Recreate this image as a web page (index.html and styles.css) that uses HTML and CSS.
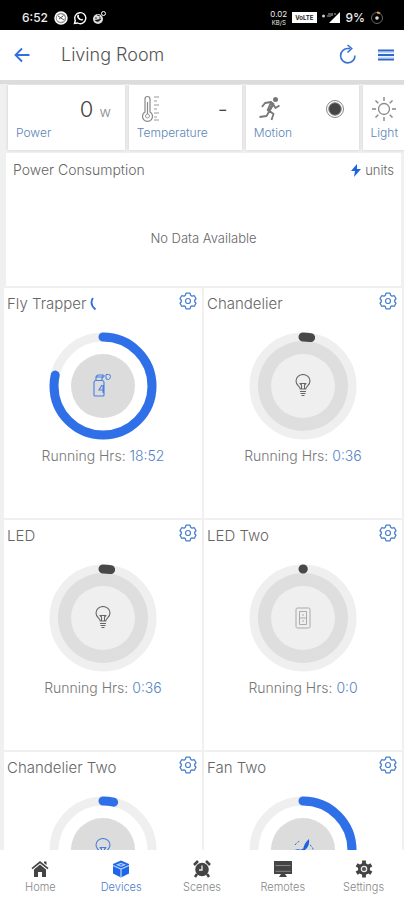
FILE: index.html
```html
<!DOCTYPE html>
<html lang="en">
<head>
<meta charset="utf-8">
<meta name="viewport" content="width=device-width, initial-scale=1">
<title>Living Room</title>
<link rel="stylesheet" href="styles.css">
</head>
<body>
<svg class="defs" aria-hidden="true">
  <symbol id="gear" viewBox="0 0 18 18"><path d="M7 1.200h4l.7 2.200 1.300.8 2.300-.5 1.700 3-1.300 1.500v1.600l1.300 1.500-1.700 3-2.300-.5-1.300.8-.7 2.200H7l-.7-2.200-1.300-.8-2.300.5-1.700-3 1.300-1.500V8.200L1 6.700l1.700-3 2.300.5 1.300-.8z" fill="none" stroke="currentColor" stroke-width="1.300" stroke-linejoin="round"/><circle cx="9" cy="9" r="2.500" fill="none" stroke="currentColor" stroke-width="1.200"/></symbol>
  <symbol id="bulb" viewBox="0 0 18 24"><path d="M6.200 15c0-2.500-4.200-3.500-4.200-8a7 6.500 0 0 1 14 0c0 4.500-4.200 5.500-4.200 8z M6 17.500h6 M6.500 19.500h5 M7.500 21.500h3 M7.500 14.500V11L6 9.500h6L10.500 11v3.500" fill="none" stroke="currentColor" stroke-width="1.100" stroke-linejoin="round"/></symbol>
  <symbol id="spray" viewBox="0 0 18 24"><path d="M1 9.500q0-2 2-2h6q2 0 2 2V22q0 1-1 1H2q-1 0-1-1z M3 7V4h6v3 M3 3.500 5 2h5v3 M10 3h2 M9 12l-3 5h4v-5 M10 17v3" fill="none" stroke="currentColor" stroke-width="1.100"/><path d="M13 1.500h2.500q2 0 2 2t-2 3L13 6z" fill="none" stroke="currentColor"/></symbol>
  <symbol id="switch" viewBox="0 0 18 24"><rect x="2" y="2" width="14" height="20" rx="1.500" fill="none" stroke="currentColor"/><path d="M5.500 5.500h7v13h-7z M5.500 12h7 M9 8v2 M9 14v2" fill="none" stroke="currentColor"/></symbol>
  <symbol id="fan" viewBox="0 0 24 24"><path d="M12 11Q13 4 18 0q1 7-4 11z M10.500 11Q5 9 1 13q5 2 9.500 0z M13 14q0 6 6 8 1-5-4-9z" fill="currentColor"/><circle cx="12" cy="12" r="2.200" fill="currentColor"/><path d="M4 6q2-3 5-4 M19 6q3 2 3 5 M4 18q2 3 5 3" fill="none" stroke="currentColor" stroke-dasharray="2 1.500"/></symbol>
</svg>

<div class="status">
  <div class="status-side">
    <span class="clock">6:52</span>
    <svg width="14" height="14" viewBox="0 0 14 14"><circle cx="7" cy="7" r="6" fill="#999" stroke="#fff" stroke-width="1.500"/><path d="M3 5l4-2 4 3-1 4-4 1-3-2z" fill="#fff"/><path d="M4 5l6 4M5 8l4-3" stroke="#555"/></svg>
    <svg width="14" height="14" viewBox="0 0 14 14"><path d="M1.500 12.500l.8-3A5.500 5.500 0 1 1 4.700 12z" fill="none" stroke="#fff" stroke-width="1.400"/><path d="M4.500 4q1-1 1.700.7L5.700 6 8 8.200l1.200-.5q1.800 1 .3 1.800Q6.500 10 4.500 7q-1-2 0-3z" fill="#fff"/></svg>
    <svg width="14" height="14" viewBox="0 0 14 14"><circle cx="6" cy="8" r="5" fill="#ddd"/><circle cx="11.500" cy="2.500" r="2" fill="none" stroke="#fff"/><path d="M3 7h2M7 7h2M3 9q3 3 6-1M5 4l3 1" stroke="#333"/></svg>
  </div>
  <div class="status-side">
    <span class="rate"><b>0.02</b><b class="unit">KB/S</b></span>
    <span class="volte">VoLTE</span>
    <svg width="19" height="13" viewBox="0 0 19 13"><circle cx="1.500" cy="5" r="1.500" fill="#ccc"/><path d="M18 1v11H7z" fill="#fff"/><path d="M6 3h3M10 2v3M12 3h2M5 5h4" stroke="#aaa" stroke-width="1.200"/></svg>
    <span class="battery">9%</span>
    <svg width="14" height="14" viewBox="0 0 14 14"><circle cx="7" cy="7" r="5.500" fill="none" stroke="#666"/><path d="M7 1.500a5.500 5.500 0 0 1 3 .9" fill="none" stroke="#e9a13b" stroke-width="1.800"/><circle cx="7" cy="7" r="1.800" fill="#ddd"/></svg>
  </div>
</div>

<header class="topbar">
  <button class="icon-btn" aria-label="Back"><svg width="16" height="16" viewBox="0 0 16 16"><path d="M15.500 8H1.500M8 1.500L1.500 8 8 14.500" fill="none" stroke="#2f6fde" stroke-width="1.800"/></svg></button>
  <h1>Living Room</h1>
  <button class="icon-btn" aria-label="Refresh"><svg width="18" height="22" viewBox="0 0 18 22"><path d="M16 11.500a7.200 7.200 0 1 1-7.200-7H11" fill="none" stroke="#3973cf" stroke-width="1.600"/><path d="M8.500 1l4.200 3.500-4.200 4" fill="none" stroke="#3973cf" stroke-width="1.600"/></svg></button>
  <button class="icon-btn menu" aria-label="Menu"><svg width="16" height="12" viewBox="0 0 16 12"><path d="M0 1.500h16M0 6h16M0 10.500h16" stroke="#2f67cd" stroke-width="2"/><path d="M0 3.700h16M0 8.200h16" stroke="#b3cbf2"/></svg></button>
</header>

<main>
  <section class="sensors" aria-label="Sensors">
    <article class="sensor">
      <div class="reading end"><span class="value">0</span><span class="unit-w">w</span></div>
      <div class="label">Power</div>
    </article>
    <article class="sensor">
      <div class="reading">
        <svg width="20" height="28" viewBox="0 0 20 28"><path d="M4 17V4a2.500 2.500 0 0 1 5 0v13a5 5 0 1 1-5 0z M6.500 7v12" fill="none" stroke="#888" stroke-width="1.200"/><circle cx="6.500" cy="21" r="2" fill="none" stroke="#999"/><path d="M13 2h5M13 6h3M13 10h5M13 14h3M13 18h5M13 22h3M13 25h5" stroke="#999"/></svg>
        <span class="value">-</span>
      </div>
      <div class="label">Temperature</div>
    </article>
    <article class="sensor">
      <div class="reading">
        <svg width="24" height="26" viewBox="0 0 24 26"><circle cx="17.500" cy="3.500" r="2.500" fill="#777"/><path d="M4 11l3-4 6-1 2.500 2-4 7 4 3-2 6M15 8l2.500 4 4-2.500M11.500 15l-3 5-7 1" fill="none" stroke="#777" stroke-width="1.800" stroke-linejoin="round"/><path d="M12.500 7l2 2-4 6-1-1z" fill="#999" stroke="#777" stroke-width="1.500"/></svg>
        <svg width="20" height="20" viewBox="0 0 20 20"><circle cx="10" cy="10" r="8.500" fill="#fff" stroke="#888"/><circle cx="10" cy="10" r="6.200" fill="#444" stroke="#777"/></svg>
      </div>
      <div class="label">Motion</div>
    </article>
    <article class="sensor">
      <div class="reading sun">
        <svg width="26" height="26" viewBox="0 0 26 26"><circle cx="13" cy="13" r="5.500" fill="none" stroke="#888" stroke-width="1.300"/><path d="M13 1v4M13 21v4M1 13h4M21 13h4M4.500 4.500l2.800 2.800M18.700 18.700l2.800 2.800M4.500 21.500l2.800-2.800M18.700 7.300l2.800-2.800" stroke="#888" stroke-width="1.400"/></svg>
      </div>
      <div class="label">Light</div>
    </article>
  </section>

  <section class="consumption">
    <div class="consumption-head">
      <h2>Power Consumption</h2>
      <span class="units"><svg width="10" height="13" viewBox="0 0 10 13"><path d="M6 0L0 7h4l-1 6 7-8H6z" fill="#1d62e0"/></svg>units</span>
    </div>
    <p>No Data Available</p>
  </section>

  <section class="devices" aria-label="Devices">
    <article class="device">
      <div class="device-head"><h2>Fly Trapper</h2><svg class="moon" width="7" height="14" viewBox="0 0 7 14"><path d="M3 1Q-1 7 5.500 12.500" fill="none" stroke="#2f6fde" stroke-width="1.800"/></svg><button class="gear" aria-label="Fly Trapper settings"><svg width="18" height="18"><use href="#gear"/></svg></button></div>
      <button class="dial on" aria-label="Toggle Fly Trapper"><svg viewBox="0 0 108 108"><circle class="track" cx="54" cy="54" r="49"/><circle class="disc" cx="54" cy="54" r="32"/><circle class="arc" cx="54" cy="54" r="49" pathLength="100" stroke-dasharray="78.600 100"/><use href="#spray" x="44" y="41" width="18" height="24"/></svg></button>
      <p>Running Hrs: <span>18:52</span></p>
    </article>
    <article class="device">
      <div class="device-head"><h2>Chandelier</h2><button class="gear" aria-label="Chandelier settings"><svg width="18" height="18"><use href="#gear"/></svg></button></div>
      <button class="dial" aria-label="Toggle Chandelier"><svg viewBox="0 0 108 108"><circle class="track" cx="54" cy="54" r="49"/><circle class="ring" cx="54" cy="54" r="45"/><circle class="disc" cx="54" cy="54" r="32"/><circle class="arc" cx="54" cy="54" r="49" pathLength="100" stroke-dasharray="2.500 100"/><use href="#bulb" x="45" y="42" width="18" height="24"/></svg></button>
      <p>Running Hrs: <span>0:36</span></p>
    </article>
    <article class="device">
      <div class="device-head"><h2>LED</h2><button class="gear" aria-label="LED settings"><svg width="18" height="18"><use href="#gear"/></svg></button></div>
      <button class="dial" aria-label="Toggle LED"><svg viewBox="0 0 108 108"><circle class="track" cx="54" cy="54" r="49"/><circle class="ring" cx="54" cy="54" r="45"/><circle class="disc" cx="54" cy="54" r="32"/><circle class="arc" cx="54" cy="54" r="49" pathLength="100" stroke-dasharray="2.500 100"/><use href="#bulb" x="45" y="42" width="18" height="24"/></svg></button>
      <p>Running Hrs: <span>0:36</span></p>
    </article>
    <article class="device">
      <div class="device-head"><h2>LED Two</h2><button class="gear" aria-label="LED Two settings"><svg width="18" height="18"><use href="#gear"/></svg></button></div>
      <button class="dial dim" aria-label="Toggle LED Two"><svg viewBox="0 0 108 108"><circle class="track" cx="54" cy="54" r="49"/><circle class="ring" cx="54" cy="54" r="45"/><circle class="disc" cx="54" cy="54" r="32"/><circle class="arc" cx="54" cy="54" r="49" pathLength="100" stroke-dasharray="0.100 100"/><use href="#switch" x="45" y="42" width="18" height="24"/></svg></button>
      <p>Running Hrs: <span>0:0</span></p>
    </article>
    <article class="device">
      <div class="device-head"><h2>Chandelier Two</h2><button class="gear" aria-label="Chandelier Two settings"><svg width="18" height="18"><use href="#gear"/></svg></button></div>
      <button class="dial on" aria-label="Toggle Chandelier Two"><svg viewBox="0 0 108 108"><circle class="track" cx="54" cy="54" r="49"/><circle class="disc" cx="54" cy="54" r="32"/><circle class="arc" cx="54" cy="54" r="49" pathLength="100" stroke-dasharray="3.500 100"/><use href="#bulb" x="45" y="42" width="18" height="24"/></svg></button>
    </article>
    <article class="device">
      <div class="device-head"><h2>Fan Two</h2><button class="gear" aria-label="Fan Two settings"><svg width="18" height="18"><use href="#gear"/></svg></button></div>
      <button class="dial on" aria-label="Toggle Fan Two"><svg viewBox="0 0 108 108"><circle class="track" cx="54" cy="54" r="49"/><circle class="disc" cx="54" cy="54" r="32"/><circle class="arc" cx="54" cy="54" r="49" pathLength="100" stroke-dasharray="40 100"/><use class="blades" href="#fan" x="42" y="43" width="24" height="24"/></svg></button>
    </article>
  </section>
</main>

<nav class="tabs" aria-label="Main">
  <a href="#home"><svg width="18" height="18" viewBox="0 0 18 18"><path d="M9 1l8.500 7-1 1.300L9 3.300 1.500 9.300.5 8zM13 1.500h2.500V5L13 3z" fill="#444"/><path d="M9 4.500l6 5V17h-4v-5H7v5H3V9.500z" fill="#444"/></svg>Home</a>
  <a href="#devices" class="active" aria-current="page"><svg width="18" height="18" viewBox="0 0 18 18"><path d="M9 .5L17 4v9.500L9 17.500 1 13.500V4z" fill="#1d66e8"/><path d="M1 5.500L9 9l8-3.500M9 9v8.500M9 3.500l3.500 1.300L9 6.200 5.500 4.800z" fill="none" stroke="#b8d2ff" stroke-width="1.200"/></svg>Devices</a>
  <a href="#scenes"><svg width="18" height="18" viewBox="0 0 18 18"><circle cx="9" cy="9.500" r="6.800" fill="#444"/><path d="M1 5l4-4M17 5l-4-4M4 14l-2 3M14 14l2 3" stroke="#444" stroke-width="2.500"/><path d="M9 5.500v4.500H6" fill="none" stroke="#eee" stroke-width="1.300"/></svg>Scenes</a>
  <a href="#remotes"><svg width="20" height="18" viewBox="0 0 20 18"><path d="M1 1h18v13h-7l2 3H6l2-3H1z" fill="#444"/><path d="M2.500 11.300h15M2.500 5.500h15" stroke="#888"/></svg>Remotes</a>
  <a href="#settings"><svg width="18" height="18" viewBox="0 0 18 18"><circle cx="9" cy="9" r="6" fill="#444"/><path d="M9 .5v17M1.600 4.800l14.800 8.400M1.600 13.200l14.800-8.400" stroke="#444" stroke-width="3.800"/><circle cx="9" cy="9" r="2.700" fill="#555" stroke="#eee" stroke-width="1.200"/></svg>Settings</a>
</nav>
</body>
</html>
```

FILE: styles.css
```css
* { box-sizing: border-box; }

body {
  margin: 0;
  height: 100vh;
  display: flex;
  flex-direction: column;
  overflow: hidden;
  background: #fff;
  color: #666;
  font: 300 14px/18px Inter, "Liberation Sans", sans-serif;
}

h1, h2, p { margin: 0; font-weight: inherit; }
h2 { font-size: 14px; }
svg { flex: none; }
button { padding: 0; border: 0; background: none; cursor: pointer; }
.defs { position: absolute; width: 0; height: 0; }

.status {
  flex: none;
  display: flex;
  justify-content: space-between;
  align-items: center;
  height: 30px;
  padding: 5px 20px 0 22px;
  background: #000;
  color: #eee;
}
.status-side { display: flex; align-items: center; gap: 5px; }
.clock { margin-right: 1px; font-size: 12px; font-weight: 500; }
.battery { font-size: 12px; font-weight: 500; }
.rate { display: flex; flex-direction: column; align-items: center; font-size: 8px; line-height: 9px; }
.rate .unit { font-size: 6px; line-height: 7px; }
.volte {
  padding: 0 3px;
  background: #fff;
  color: #222;
  font-size: 6px;
  font-weight: 700;
  line-height: 11px;
}

.topbar {
  flex: none;
  display: flex;
  align-items: center;
  height: 50px;
  padding: 0 10px 0 14px;
  background: #fff;
}
.topbar h1 { flex: 1; margin-left: 31px; font-size: 18px; line-height: 24px; color: #555; }
.icon-btn { display: flex; }
.menu { margin-left: 21px; }

main {
  flex: 1;
  min-height: 0;
  overflow: hidden;
  border-top: 4px solid #dcdcdc;
  background: #f0f0f0;
}

.sensors {
  display: flex;
  gap: 4px;
  padding: 1px 0 3px 8px;
  overflow: hidden;
}
.sensor {
  flex: 0 0 28.5%;
  height: 65px;
  padding: 8px 10px 0 8px;
  background: #fff;
  box-shadow: 0 0 3px #ccc;
}
.sensor:first-child { flex-basis: 29.5%; }
.reading { display: flex; align-items: center; justify-content: space-between; height: 32px; padding: 0 4px; }
.reading.end { justify-content: flex-end; align-items: baseline; gap: 6px; line-height: 32px; }
.reading.sun { padding: 0; }
.value { color: #444; font-size: 22px; }
.unit-w { color: #888; font-size: 14px; }
.label { color: #5c84b8; font-size: 12px; line-height: 16px; }

.consumption {
  height: 133px;
  margin: 0 3px 2px 6px;
  padding: 8px 7px;
  background: #fff;
}
.consumption-head { display: flex; justify-content: space-between; }
.units { display: flex; align-items: center; gap: 4px; font-size: 13px; }
.consumption p { margin-top: 50px; text-align: center; font-size: 13px; }

.devices {
  display: grid;
  grid-template-columns: 1fr 1fr;
  gap: 2px;
  margin: 0 2px 0 4px;
}
.device {
  display: flex;
  flex-direction: column;
  align-items: center;
  height: 230px;
  background: #fff;
}
.device-head {
  align-self: stretch;
  display: flex;
  align-items: center;
  height: 32px;
  margin-bottom: 12px;
  padding: 0 5px 0 3px;
}
.device-head h2 { font-size: 15px; }
.moon { margin-left: 4px; }
.gear { display: flex; align-self: flex-start; margin: 4px 0 0 auto; color: #4a80cc; }
.dial { width: 108px; height: 108px; color: #666; }
.dial > svg { display: block; width: 100%; }
.dial.dim { color: #aaa; }
.dial.on { color: #4a7fe0; }
.blades { color: #1d62e0; }
.track { fill: none; stroke: #efefef; stroke-width: 9px; }
.ring { fill: #dedede; }
.disc { fill: #efefef; }
.on .disc { fill: #dcdcdc; }
.arc {
  fill: none;
  stroke: #484848;
  stroke-width: 9px;
  stroke-linecap: round;
  transform: rotate(-90deg);
  transform-origin: center;
}
.on .arc { stroke: #2f70e8; }
.device p { margin-top: 7px; color: #777; }
.device p span { color: #5582c4; }

.tabs {
  flex: none;
  display: grid;
  grid-template-columns: repeat(5, 1fr);
  height: 50px;
  padding-top: 10px;
  background: #fff;
}
.tabs a {
  display: flex;
  flex-direction: column;
  align-items: center;
  gap: 2px;
  color: #888;
  font-size: 11px;
  line-height: 14px;
  text-decoration: none;
}
.tabs .active { color: #4a80cc; }
```
